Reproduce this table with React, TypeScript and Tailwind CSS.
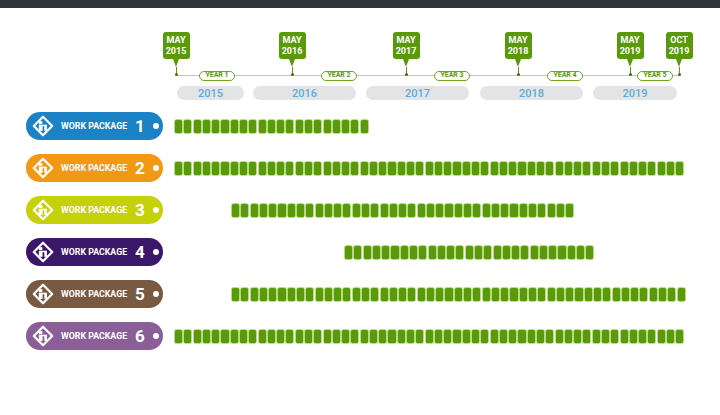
import React from "react";

const callouts = [
  { m: "MAY", y: "2015", x: 176 },
  { m: "MAY", y: "2016", x: 292 },
  { m: "MAY", y: "2017", x: 406 },
  { m: "MAY", y: "2018", x: 518 },
  { m: "MAY", y: "2019", x: 630 },
  { m: "OCT", y: "2019", x: 679 },
];

const yearTags = [
  { label: "YEAR 1", x: 199 },
  { label: "YEAR 2", x: 321 },
  { label: "YEAR 3", x: 434 },
  { label: "YEAR 4", x: 547 },
  { label: "YEAR 5", x: 637 },
];

const yearBars = [
  { label: "2015", ml: "ml-[177px]", w: "w-[67px]" },
  { label: "2016", ml: "ml-[9px]", w: "w-[103px]" },
  { label: "2017", ml: "ml-[10px]", w: "w-[103px]" },
  { label: "2018", ml: "ml-[11px]", w: "w-[103px]" },
  { label: "2019", ml: "ml-[10px]", w: "w-[84px]" },
];

const packages = [
  { n: 1, bg: "bg-[#1b82c5]", hex: "#1b82c5", ml: "ml-[12px]", count: 21 },
  { n: 2, bg: "bg-[#f29914]", hex: "#f29914", ml: "ml-[12px]", count: 55 },
  { n: 3, bg: "bg-[#c6d10c]", hex: "#c6d10c", ml: "ml-[69px]", count: 37 },
  { n: 4, bg: "bg-[#3b1769]", hex: "#3b1769", ml: "ml-[182px]", count: 27 },
  { n: 5, bg: "bg-[#7a5943]", hex: "#7a5943", ml: "ml-[69px]", count: 49 },
  { n: 6, bg: "bg-[#8c5e98]", hex: "#8c5e98", ml: "ml-[12px]", count: 55 },
];

const PackageIcon = ({ color }: { color: string }) => (
  <svg width="22" height="22" viewBox="0 0 20 20" className="shrink-0">
    <path d="M10 1.6 L18.4 10 L10 18.4 L1.6 10 Z" fill="none" stroke="#fff" strokeWidth="2" strokeLinejoin="round" />
    <rect x="6.2" y="5.6" width="3.2" height="2.6" fill="#fff" />
    <rect x="6.2" y="8.8" width="7.4" height="5.6" fill="#fff" />
    <rect x="9.6" y="10.2" width="1.6" height="4.4" fill={color} />
  </svg>
);

const Bars = ({ count, ml }: { count: number; ml: string }) => (
  <div className={`flex gap-[2.2px] ${ml}`}>
    {Array.from({ length: count }).map((_, i) => (
      <div
        key={i}
        className="w-[7.1px] h-[13px] rounded-[1.5px] bg-[#5a990b] shadow-[0_0_0_0.8px_#a3d160]"
      />
    ))}
  </div>
);

export default function App() {
  return (
    <div className="w-[720px] h-[415px] bg-white overflow-hidden" style={{ fontFamily: "Roboto, 'Open Sans', Arial, sans-serif" }}>
      <div className="h-[8px] bg-[#30343d]" />

      {/* Timeline header */}
      <div className="relative h-[104px] pt-[78px]">
        <div className="absolute left-[176px] top-[66.5px] w-[504px] h-[1.5px] bg-[#c4c4c4]" />

        {callouts.map((c) => (
          <div
            key={c.m + c.y}
            className="absolute top-[24px] w-[26px] -ml-[13px] flex flex-col items-center"
            style={{ left: c.x }}
          >
            <div className="w-[27px] h-[27px] rounded-[3px] bg-[#5a990b] flex flex-col items-center justify-center text-white font-bold text-[9px] leading-[11px]">
              <span>{c.m}</span>
              <span>{c.y}</span>
            </div>
            <div className="w-0 h-0 border-l-[3.5px] border-r-[3.5px] border-t-[8px] border-l-transparent border-r-transparent border-t-[#5a990b]" />
            <div className="w-[1px] h-[6px] bg-[#5a990b]" />
            <div className="w-[3px] h-[3px] rounded-full bg-[#3f6e08]" />
          </div>
        ))}

        {yearTags.map((t) => (
          <div
            key={t.label}
            className="absolute top-[62.5px] w-[36px] h-[10px] rounded-full border border-[#6aa81a] bg-white flex items-center justify-center text-[7px] font-bold text-[#5a990b] leading-none"
            style={{ left: t.x }}
          >
            {t.label}
          </div>
        ))}

        <div className="flex">
          {yearBars.map((b) => (
            <div
              key={b.label}
              className={`${b.ml} ${b.w} h-[14px] rounded-full bg-[#e3e4e6] flex items-center justify-center text-[11px] font-medium text-[#5aabdb] leading-none`}
            >
              {b.label}
            </div>
          ))}
        </div>
      </div>

      {/* Work packages */}
      <div className="flex flex-col gap-[14px] pl-[26px]">
        {packages.map((p) => (
          <div key={p.n} className="flex items-center">
            <div className={`${p.bg} w-[137px] h-[28px] rounded-full flex items-center pl-[6px] pr-[4px] shrink-0`}>
              <PackageIcon color={p.hex} />
              <span className="ml-[7px] text-white font-bold text-[8.8px] leading-none">WORK PACKAGE</span>
              <span className="ml-[8px] text-white font-bold text-[17px] leading-none">{p.n}</span>
              <span className="ml-auto w-[6px] h-[6px] rounded-full bg-white" />
            </div>
            <Bars count={p.count} ml={p.ml} />
          </div>
        ))}
      </div>
    </div>
  );
}
